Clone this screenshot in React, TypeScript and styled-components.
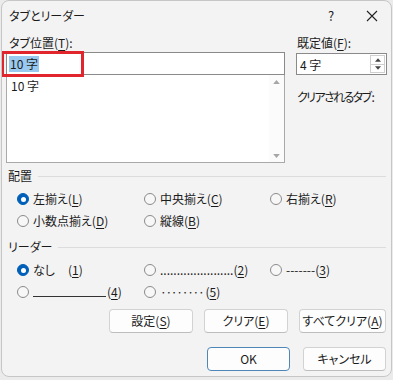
import React from 'react';
import styled, { createGlobalStyle } from 'styled-components';

const Global = createGlobalStyle`
  html, body { margin: 0; padding: 0; background: #ebebeb; }
  body {
    font-family: "Noto Sans CJK JP", "Noto Sans", sans-serif;
    font-size: 12px;
    color: #1b1b1b;
    font-feature-settings: "palt";
  }
  * { box-sizing: border-box; }
`;

const Dialog = styled.div`
  width: 391px;
  height: 377px;
  margin-left: 1px;
  border: 1px solid #c6c6c6;
  border-radius: 8px;
  background: #f3f3f3;
  display: flex;
  flex-direction: column;
  overflow: hidden;
`;

const TitleBar = styled.div`
  height: 29px;
  display: flex;
  align-items: center;
  padding-left: 7px;
`;

const Title = styled.div`
  line-height: 16px;
  font-size: 12px;
`;

const TitleButton = styled.div<{ $w: number }>`
  width: ${(p) => p.$w}px;
  height: 29px;
  display: flex;
  align-items: center;
  justify-content: center;
  font-size: 13px;
  color: #222;
`;

const TitleButtons = styled.div`
  margin-left: auto;
  display: flex;
`;

const Body = styled.div`
  padding: 0 3px 0 4px;
  display: flex;
  flex-direction: column;
`;

const TopGrid = styled.div`
  display: grid;
  grid-template-columns: 279px 91px;
  column-gap: 11px;
`;

const Col = styled.div`
  display: flex;
  flex-direction: column;
`;

const Label = styled.div<{ $mb?: number; $ml?: number }>`
  line-height: 16px;
  margin: 5px 0 ${(p) => p.$mb ?? 1}px ${(p) => p.$ml ?? 3}px;
`;

const U = styled.span`
  text-decoration: underline;
  text-underline-offset: 2px;
`;

const InputBox = styled.div`
  position: relative;
  height: 23px;
  border: 1px solid #8a8a8a;
  background: #fff;
  display: flex;
  align-items: center;
  padding-left: 2px;
`;

const Selected = styled.span`
  background: #99c9ef;
  line-height: 16px;
  padding: 0 1px;
`;

const Highlight = styled.div`
  position: absolute;
  left: -6px;
  top: -2px;
  width: 83px;
  height: 26px;
  border: 3px solid #e0262c;
  pointer-events: none;
`;

const ListBox = styled.div`
  height: 88px;
  border: 1px solid #a9a9a9;
  border-top: none;
  background: #fff;
  display: flex;
`;

const ListItems = styled.div`
  flex: 1;
  padding: 3px 0 0 4px;
  line-height: 16px;
`;

const ScrollBar = styled.div`
  width: 15px;
  display: flex;
  flex-direction: column;
  justify-content: space-between;
  align-items: center;
  padding: 5px 0 4px;
  background: #fbfbfb;
`;

const SpinBox = styled.div`
  height: 22px;
  border: 1px solid #8a8a8a;
  background: #fff;
  display: flex;
  align-items: stretch;
`;

const SpinText = styled.div`
  flex: 1;
  display: flex;
  align-items: center;
  padding-left: 3px;
`;

const SpinButtons = styled.div`
  width: 15px;
  margin: 1px 1px 1px 0;
  border: 1px solid #cfcfcf;
  display: flex;
  flex-direction: column;
`;

const SpinHalf = styled.div<{ $top?: boolean }>`
  flex: 1;
  display: flex;
  align-items: center;
  justify-content: center;
  border-bottom: ${(p) => (p.$top ? '1px solid #cfcfcf' : 'none')};
`;

const Note = styled.div`
  margin: 14px 0 0 1px;
  line-height: 16px;
  white-space: nowrap;
  letter-spacing: -1.6px;
`;

const SectionHeader = styled.div<{ $mt: number }>`
  margin-top: ${(p) => p.$mt}px;
  display: flex;
  align-items: center;
  padding-left: 2px;
  margin-right: 2px;
  line-height: 16px;
`;

const SectionLine = styled.div`
  flex: 1;
  height: 1px;
  background: #dcdcdc;
  margin-left: 6px;
`;

const RadioGrid = styled.div`
  margin-top: 4px;
  padding-left: 11px;
  display: grid;
  grid-template-columns: 127px 126px 1fr;
  grid-auto-rows: 22px;
`;

const RadioItem = styled.div`
  display: flex;
  align-items: center;
  gap: 4px;
  line-height: 16px;
  white-space: nowrap;
`;

const Circle = styled.span<{ $on?: boolean }>`
  width: 12px;
  height: 12px;
  border-radius: 50%;
  flex: none;
  position: relative;
  background: ${(p) => (p.$on ? '#005fb8' : '#f7f7f7')};
  border: 1px solid ${(p) => (p.$on ? '#005fb8' : '#8b8b8b')};
  &::after {
    content: '';
    display: ${(p) => (p.$on ? 'block' : 'none')};
    position: absolute;
    left: 2.5px;
    top: 2.5px;
    width: 5px;
    height: 5px;
    border-radius: 50%;
    background: #fff;
  }
`;

const Gap = styled.span<{ $w: number }>`
  display: inline-block;
  width: ${(p) => p.$w}px;
`;

const UnderLine = styled.span`
  display: inline-block;
  width: 73px;
  height: 11px;
  border-bottom: 1px solid #333;
  margin-right: 1px;
`;

const Dots = styled.span`
  letter-spacing: -1.3px;
  margin-right: 2px;
`;

const ButtonRow = styled.div<{ $mt: number; $gap: number }>`
  margin-top: ${(p) => p.$mt}px;
  margin-right: 2px;
  display: flex;
  justify-content: flex-end;
  gap: ${(p) => p.$gap}px;
`;

const Button = styled.div<{ $w: number; $primary?: boolean }>`
  width: ${(p) => p.$w}px;
  height: 24px;
  border-radius: 4px;
  background: #fdfdfd;
  border: 1px solid ${(p) => (p.$primary ? '#4f86b8' : '#d2d2d2')};
  border-bottom-color: ${(p) => (p.$primary ? '#4f86b8' : '#bdbdbd')};
  display: flex;
  align-items: center;
  justify-content: center;
  line-height: 16px;
`;

const Tri = ({ up, color = '#a6a6a6', size = 7 }: { up?: boolean; color?: string; size?: number }) => (
  <svg width={size} height={Math.round(size * 0.6)} viewBox="0 0 10 6">
    {up ? <polygon points="0,6 10,6 5,0" fill={color} /> : <polygon points="0,0 10,0 5,6" fill={color} />}
  </svg>
);

const CloseIcon = () => (
  <svg width="12" height="12" viewBox="0 0 12 12">
    <path d="M1 1 L11 11 M11 1 L1 11" stroke="#222" strokeWidth="1.1" />
  </svg>
);

const Radio = ({ on, children }: { on?: boolean; children: React.ReactNode }) => (
  <RadioItem>
    <Circle $on={on} />
    <span>{children}</span>
  </RadioItem>
);

export default function App() {
  return (
    <>
      <Global />
      <Dialog>
        <TitleBar>
          <Title>タブとリーダー</Title>
          <TitleButtons>
            <TitleButton $w={44}>?</TitleButton>
            <TitleButton $w={38}>
              <CloseIcon />
            </TitleButton>
          </TitleButtons>
        </TitleBar>
        <Body>
          <TopGrid>
            <Col>
              <Label>
                タブ位置(<U>T</U>):
              </Label>
              <InputBox>
                <Selected>10 字</Selected>
                <Highlight />
              </InputBox>
              <ListBox>
                <ListItems>10 字</ListItems>
                <ScrollBar>
                  <Tri up />
                  <Tri />
                </ScrollBar>
              </ListBox>
            </Col>
            <Col>
              <Label $mb={2} $ml={1}>
                既定値(<U>F</U>):
              </Label>
              <SpinBox>
                <SpinText>4 字</SpinText>
                <SpinButtons>
                  <SpinHalf $top>
                    <Tri up color="#444" size={6} />
                  </SpinHalf>
                  <SpinHalf>
                    <Tri color="#444" size={6} />
                  </SpinHalf>
                </SpinButtons>
              </SpinBox>
              <Note>クリアされるタブ :</Note>
            </Col>
          </TopGrid>

          <SectionHeader $mt={5}>
            配置
            <SectionLine />
          </SectionHeader>
          <RadioGrid>
            <Radio on>
              左揃え(<U>L</U>)
            </Radio>
            <Radio>
              中央揃え(<U>C</U>)
            </Radio>
            <Radio>
              右揃え(<U>R</U>)
            </Radio>
            <Radio>
              小数点揃え(<U>D</U>)
            </Radio>
            <Radio>
              縦線(<U>B</U>)
            </Radio>
          </RadioGrid>

          <SectionHeader $mt={7}>
            リーダー
            <SectionLine />
          </SectionHeader>
          <RadioGrid>
            <Radio on>
              なし<Gap $w={13} />(<U>1</U>)
            </Radio>
            <Radio>
              ......................(<U>2</U>)
            </Radio>
            <Radio>
              -------(<U>3</U>)
            </Radio>
            <Radio>
              <UnderLine />(<U>4</U>)
            </Radio>
            <Radio>
              <Dots>········</Dots>(<U>5</U>)
            </Radio>
          </RadioGrid>

          <ButtonRow $mt={6} $gap={11}>
            <Button $w={84}>
              設定(<U>S</U>)
            </Button>
            <Button $w={84}>
              クリア(<U>E</U>)
            </Button>
            <Button $w={87}>
              すべてクリア(<U>A</U>)
            </Button>
          </ButtonRow>
          <ButtonRow $mt={14} $gap={13}>
            <Button $w={83} $primary>
              OK
            </Button>
            <Button $w={83}>キャンセル</Button>
          </ButtonRow>
        </Body>
      </Dialog>
    </>
  );
}
